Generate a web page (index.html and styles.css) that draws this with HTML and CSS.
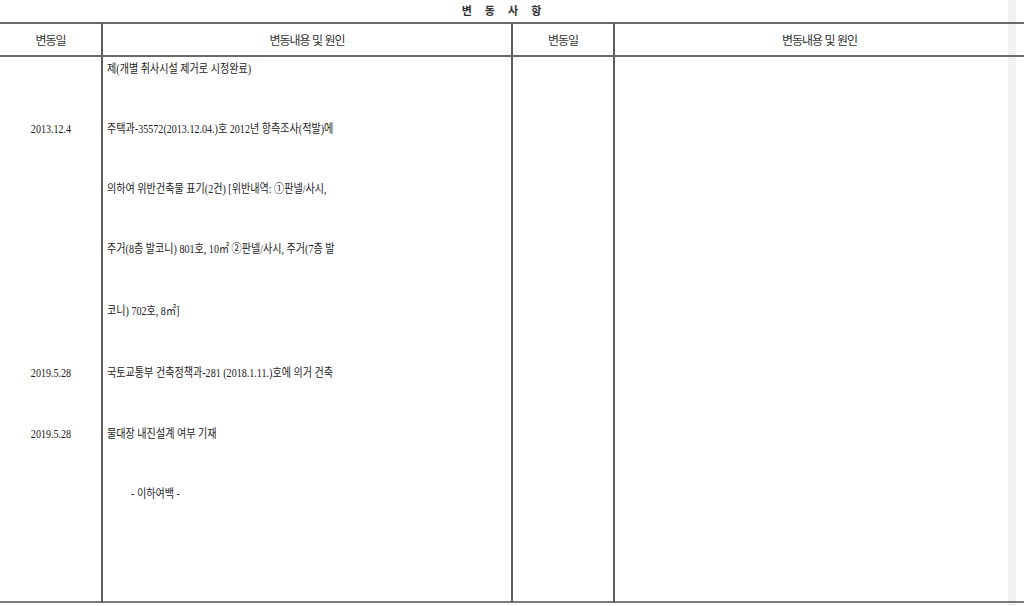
FILE: index.html
```html
<!DOCTYPE html>
<html lang="ko">
<head>
<meta charset="utf-8">
<title>변동사항</title>
<link rel="stylesheet" href="styles.css">
</head>
<body>
<div class="page">
  <div class="scroll-strip"></div>
  <div class="title">변 동 사 항</div>
  <table class="grid">
    <colgroup>
      <col class="c-date">
      <col class="c-text">
      <col class="c-date2">
      <col class="c-text2">
    </colgroup>
    <thead>
      <tr class="head">
        <th>변동일</th>
        <th>변동내용 및 원인</th>
        <th>변동일</th>
        <th class="last">변동내용 및 원인</th>
      </tr>
    </thead>
    <tbody>
      <tr class="body-row">
        <td class="dates">
          <div class="line"></div>
          <div class="line"><span class="sq ctr">2013.12.4</span></div>
          <div class="line"></div>
          <div class="line l2"></div>
          <div class="line l2"></div>
          <div class="line l1"><span class="sq ctr">2019.5.28</span></div>
          <div class="line"><span class="sq ctr">2019.5.28</span></div>
        </td>
        <td class="texts">
          <div class="line"><span class="sq">제(개별 취사시설 제거로 시정완료)</span></div>
          <div class="line"><span class="sq">주택과-35572(2013.12.04.)호 2012년 항측조사(적발)에</span></div>
          <div class="line"><span class="sq">의하여 위반건축물 표기(2건) [위반내역: ①판넬/사시,</span></div>
          <div class="line l2"><span class="sq">주거(8층 발코니) 801호, 10㎡ ②판넬/사시, 주거(7층 발</span></div>
          <div class="line l2"><span class="sq">코니) 702호, 8㎡]</span></div>
          <div class="line l1"><span class="sq">국토교통부 건축정책과-281 (2018.1.11.)호에 의거 건축</span></div>
          <div class="line"><span class="sq">물대장 내진설계 여부 기재</span></div>
          <div class="line indent"><span class="sq">- 이하여백 -</span></div>
        </td>
        <td></td>
        <td class="last"></td>
      </tr>
    </tbody>
  </table>
</div>
</body>
</html>
```

FILE: styles.css
```css
html, body {
  margin: 0;
  padding: 0;
  background: #ffffff;
}

body {
  font-family: "Liberation Serif", "Noto Sans CJK KR", serif;
  color: #222;
  width: 1024px;
  height: 606px;
  overflow: hidden;
}

.page {
  position: relative;
  width: 1024px;
  height: 606px;
}

.scroll-strip {
  position: absolute;
  left: 1008px;
  top: 0;
  width: 8px;
  height: 606px;
  background: #f1f1f1;
  z-index: 0;
}

.title {
  position: relative;
  width: 1008px;
  height: 22px;
  box-sizing: border-box;
  padding-top: 4px;
  text-align: center;
  font-family: "Noto Sans CJK KR", sans-serif;
  font-weight: bold;
  font-size: 11px;
  line-height: 13px;
  letter-spacing: 5px;
  color: #333;
  z-index: 1;
}

.grid {
  position: relative;
  z-index: 1;
  width: 1024px;
  table-layout: fixed;
  border-collapse: collapse;
  border-top: 2px solid #6a6a6a;
  border-bottom: 2px solid #7a7a7a;
}

.c-date { width: 102px; }
.c-text { width: 410px; }
.c-date2 { width: 102px; }
.c-text2 { width: 410px; }

.grid th,
.grid td {
  border-right: 2px solid #5e5e5e;
  padding: 0;
}

.grid .last {
  border-right: none;
}

.head th {
  height: 31px;
  border-bottom: 2px solid #6a6a6a;
  font-family: "Noto Sans CJK KR", sans-serif;
  font-weight: normal;
  font-size: 12px;
  letter-spacing: -1px;
  color: #333;
  text-align: center;
  vertical-align: middle;
}

.grid .body-row td {
  height: 546px;
  vertical-align: top;
  box-sizing: border-box;
  padding-top: 5px;
}

.line {
  height: 60px;
  font-size: 12px;
  line-height: 14px;
  white-space: nowrap;
}

.line.l1 {
  height: 61px;
}

.line.l2 {
  height: 62px;
}

.dates .line {
  text-align: center;
}

.grid .body-row .texts {
  padding-left: 4px;
}

.indent {
  padding-left: 24px;
}

.sq {
  display: inline-block;
  transform: scaleX(0.84);
  transform-origin: left center;
}

.sq.ctr {
  transform-origin: center center;
}
```
